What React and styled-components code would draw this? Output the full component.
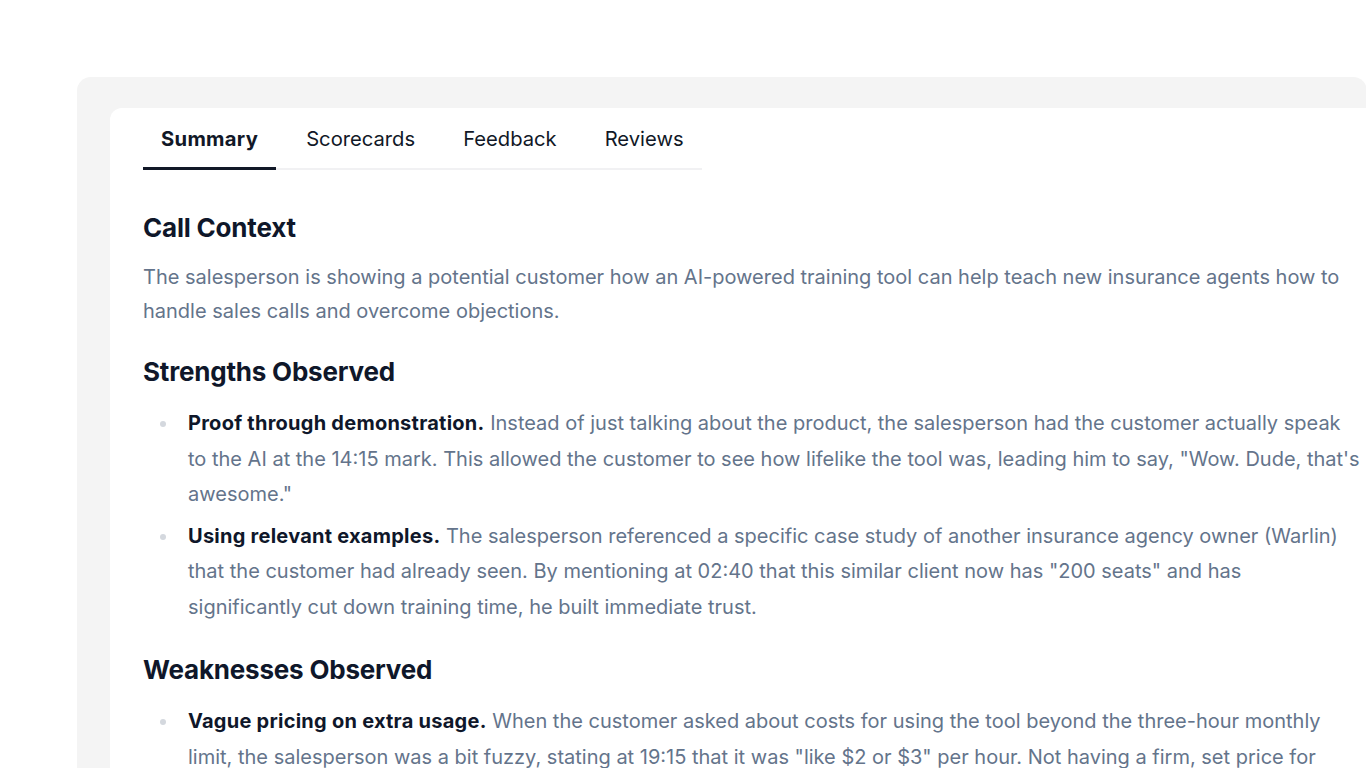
import React, { useState } from 'react'
import styled, { createGlobalStyle } from 'styled-components'

const GlobalStyle = createGlobalStyle`
  html, body {
    margin: 0;
    padding: 0;
    background: #ffffff;
  }
  body {
    font-family: Inter, 'Noto Sans', sans-serif;
  }
`

const tabs = ['Summary', 'Scorecards', 'Feedback', 'Reviews']

const strengths = [
  {
    title: 'Proof through demonstration.',
    text:
      ' Instead of just talking about the product, the salesperson had the customer actually speak to the AI at the 14:15 mark. This allowed the customer to see how lifelike the tool was, leading him to say, "Wow. Dude, that\'s awesome."',
  },
  {
    title: 'Using relevant examples.',
    text:
      ' The salesperson referenced a specific case study of another insurance agency owner (Warlin) that the customer had already seen. By mentioning at 02:40 that this similar client now has "200 seats" and has significantly cut down training time, he built immediate trust.',
  },
]

const weaknesses = [
  {
    title: 'Vague pricing on extra usage.',
    text:
      ' When the customer asked about costs for using the tool beyond the three-hour monthly limit, the salesperson was a bit fuzzy, stating at 19:15 that it was "like $2 or $3" per hour. Not having a firm, set price for extra usage can make a buyer hesitate.',
  },
]

function App() {
  const [active, setActive] = useState(0)

  return (
    <Page>
      <GlobalStyle />
      <Shell>
        <Card>
          <TabList>
            {tabs.map((tab, i) => (
              <Tab key={tab} $active={i === active} onClick={() => setActive(i)}>
                {tab}
              </Tab>
            ))}
          </TabList>

          <Content>
            <Section>
              <Heading>Call Context</Heading>
              <Paragraph>
                The salesperson is showing a potential customer how an AI-powered training tool can help
                teach new insurance agents how to handle sales calls and overcome objections.
              </Paragraph>
            </Section>

            <Section>
              <Heading>Strengths Observed</Heading>
              <List>
                {strengths.map((item) => (
                  <Item key={item.title}>
                    <strong>{item.title}</strong>
                    {item.text}
                  </Item>
                ))}
              </List>
            </Section>

            <Section>
              <Heading>Weaknesses Observed</Heading>
              <List>
                {weaknesses.map((item) => (
                  <Item key={item.title}>
                    <strong>{item.title}</strong>
                    {item.text}
                  </Item>
                ))}
              </List>
            </Section>
          </Content>
        </Card>
      </Shell>
    </Page>
  )
}

export default App

const Page = styled.div`
  height: 100vh;
  overflow: hidden;
  padding: 77px 0 0 77px;
  box-sizing: border-box;
`

const Shell = styled.div`
  width: 1290px;
  min-height: 900px;
  background: #f4f4f4;
  border-radius: 14px;
  padding: 31px 0 0 33px;
  box-sizing: border-box;
`

const Card = styled.div`
  width: 1300px;
  min-height: 900px;
  background: #ffffff;
  border-radius: 12px;
  padding: 12px 0 0 33px;
  box-sizing: border-box;
`

const TabList = styled.div`
  display: inline-flex;
  gap: 12px;
  border-bottom: 2px solid #f1f1f3;
`

const Tab = styled.button`
  font-family: inherit;
  font-size: 20.2px;
  font-weight: ${(p) => (p.$active ? 700 : 400)};
  letter-spacing: ${(p) => (p.$active ? '0.3px' : '0')};
  color: #111827;
  background: none;
  border: none;
  padding: 6px 18px 16px;
  margin-bottom: -2px;
  border-bottom: 3px solid ${(p) => (p.$active ? '#111827' : 'transparent')};
  cursor: pointer;
`

const Content = styled.div`
  width: 1217px;
  padding-top: 42px;
`

const Section = styled.section`
  margin-bottom: 28px;
`

const Heading = styled.h2`
  margin: 0 0 17px;
  font-size: 26px;
  font-weight: 700;
  color: #0f172a;
  letter-spacing: -0.2px;
`

const Paragraph = styled.p`
  margin: 0;
  font-size: 20px;
  line-height: 34px;
  color: #64748b;
`

const List = styled.ul`
  margin: 0;
  padding: 2px 0 1px 45px;
  list-style: none;
`

const Item = styled.li`
  position: relative;
  font-size: 20px;
  line-height: 35.5px;
  color: #64748b;
  margin-bottom: 6px;

  &:last-child {
    margin-bottom: 0;
  }

  &::before {
    content: '';
    position: absolute;
    left: -28px;
    top: 15px;
    width: 6px;
    height: 6px;
    border-radius: 50%;
    background: #d4d8de;
  }

  strong {
    color: #0f172a;
    font-weight: 700;
    letter-spacing: 0.25px;
  }
`
